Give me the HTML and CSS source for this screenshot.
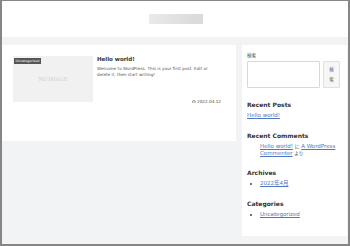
FILE: index.html
```html
<!DOCTYPE html>
<html lang="ja">
<head>
    <meta charset="UTF-8">
    <meta name="viewport" content="width=device-width, initial-scale=1.0">
    <title>Hello world!</title>
    <link rel="stylesheet" href="styles.css">
</head>
<body>
    <div class="frame">
        <header class="header">
            <div class="logo"></div>
        </header>

        <div class="content">
            <main class="main">
                <article class="entry">
                    <div class="thumb">
                        <span class="cat-label">Uncategorized</span>
                        <span class="no-image">NO IMAGE</span>
                    </div>
                    <div class="entry-body">
                        <h2 class="entry-title">Hello world!</h2>
                        <p class="excerpt">Welcome to WordPress. This is your first post. Edit or delete it, then start writing!</p>
                        <div class="date">
                            <svg class="clock" viewBox="0 0 10 10">
                                <circle cx="5" cy="5" r="4" fill="none" stroke="#444" stroke-width="1.2"/>
                                <path d="M5 2.8V5h1.8" fill="none" stroke="#444" stroke-width="1"/>
                            </svg>
                            <span>2022.04.12</span>
                        </div>
                    </div>
                </article>
            </main>

            <aside class="sidebar">
                <div class="widget search-widget">
                    <label for="s">検索</label>
                    <div class="search-row">
                        <input type="text" id="s">
                        <button type="button">検索</button>
                    </div>
                </div>

                <div class="widget">
                    <h3>Recent Posts</h3>
                    <ul class="plain">
                        <li><a href="#">Hello world!</a></li>
                    </ul>
                </div>

                <div class="widget">
                    <h3>Recent Comments</h3>
                    <ul class="indent">
                        <li>
                            <span class="line"><a href="#">Hello world!</a> <span class="jp">に</span> <a href="#">A WordPress</a></span>
                            <span class="line"><a href="#">Commenter</a> <span class="jp">より</span></span>
                        </li>
                    </ul>
                </div>

                <div class="widget">
                    <h3>Archives</h3>
                    <ul class="bullets">
                        <li><a href="#">2022年4月</a></li>
                    </ul>
                </div>

                <div class="widget">
                    <h3>Categories</h3>
                    <ul class="bullets">
                        <li><a href="#">Uncategorized</a></li>
                    </ul>
                </div>
            </aside>
        </div>
    </div>
</body>
</html>
```

FILE: styles.css
```css
* {
    margin: 0;
    padding: 0;
    box-sizing: border-box;
    font-family: 'DejaVu Sans', 'Noto Sans CJK JP', sans-serif;
}

body {
    background: #fff;
}

.frame {
    width: 350px;
    height: 246px;
    border-style: solid;
    border-color: #868686;
    border-width: 1px 2px 2px 2px;
    background: #f2f3f5;
    overflow: hidden;
}

.header {
    height: 36px;
    background: #fff;
    display: flex;
    justify-content: center;
    align-items: center;
}

.logo {
    width: 54px;
    height: 10px;
    margin-left: 2px;
    background: linear-gradient(90deg, #e9e9e9 0%, #e4e4e4 35%, #dedede 65%, #dadada 100%);
}

.content {
    display: flex;
    align-items: flex-start;
    gap: 6px;
    padding-top: 8px;
}

.main {
    width: 234px;
    height: 96px;
    background: #fff;
    padding: 11px 15px 0 11px;
}

.entry {
    display: flex;
    gap: 4px;
}

.thumb {
    position: relative;
    width: 80px;
    height: 46px;
    flex-shrink: 0;
    background: #f1f1f1;
    display: flex;
    justify-content: center;
    align-items: center;
}

.cat-label {
    position: absolute;
    top: 1.5px;
    left: 1px;
    background: #555;
    color: #fff;
    font-size: 3.3px;
    line-height: 6.5px;
    padding: 0 1.5px;
}

.no-image {
    font-family: 'Liberation Serif', serif;
    font-size: 5.5px;
    color: #cfcfcf;
    letter-spacing: 0.2px;
}

.entry-body {
    flex: 1;
    display: flex;
    flex-direction: column;
}

.entry-title {
    font-size: 5.5px;
    line-height: 7px;
    font-weight: bold;
    color: #333;
}

.excerpt {
    margin-top: 3px;
    font-size: 4.2px;
    line-height: 5.6px;
    color: #555;
}

.date {
    margin-top: auto;
    margin-bottom: -2px;
    align-self: flex-end;
    display: flex;
    align-items: center;
    gap: 0.8px;
    font-size: 4.2px;
    line-height: 5px;
    color: #444;
}

.clock {
    width: 3.8px;
    height: 3.8px;
}

.sidebar {
    width: 105px;
    background: #fff;
    padding: 8px 7px 17px 5px;
    color: #444;
    font-size: 5.5px;
}

.widget + .widget {
    margin-top: 12.5px;
}

.search-widget label {
    display: block;
    font-size: 4.5px;
    line-height: 6px;
    margin-bottom: 2px;
    color: #444;
}

.search-row {
    display: flex;
    gap: 3px;
    height: 27px;
}

.search-row input {
    width: 73px;
    height: 27px;
    border: 0.5px solid #d8d8d8;
    border-radius: 1px;
}

.search-row button {
    width: 18px;
    height: 27px;
    padding: 0 5px;
    border: 0.5px solid #e0e0e0;
    border-radius: 1px;
    background: #f6f6f6;
    color: #555;
    font-size: 4.5px;
    line-height: 10px;
}

h3 {
    font-size: 6px;
    line-height: 8px;
    font-weight: bold;
    color: #333;
    margin-bottom: 3px;
}

ul {
    line-height: 7.5px;
}

.plain {
    list-style: none;
}

.indent {
    list-style: none;
    padding-left: 13px;
    line-height: 7px;
}

.indent .line {
    display: block;
    white-space: nowrap;
}

.jp {
    font-size: 4.6px;
}

.bullets {
    padding-left: 13px;
}

a {
    color: #4f76c4;
    text-decoration: underline;
}
```
